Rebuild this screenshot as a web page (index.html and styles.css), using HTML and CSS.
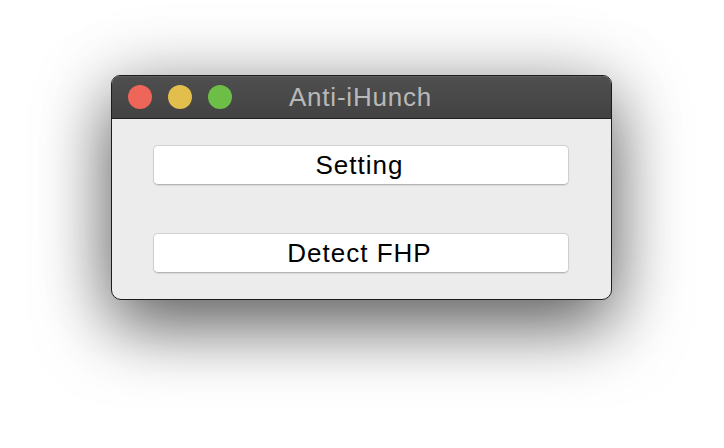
FILE: index.html
```html
<!DOCTYPE html>
<html>
<head>
<meta charset="utf-8">
<link rel="stylesheet" href="styles.css">
</head>
<body>
<div class="desk">
  <div class="window">
    <div class="titlebar">
      <div class="lights">
        <span class="light red"></span>
        <span class="light yellow"></span>
        <span class="light green"></span>
      </div>
      <div class="title">Anti-iHunch</div>
      <div></div>
    </div>
    <div class="content">
      <button class="btn">Setting</button>
      <button class="btn">Detect FHP</button>
    </div>
  </div>
</div>
</body>
</html>
```
FILE: styles.css
```css
html, body {
  margin: 0;
  padding: 0;
  background: #ffffff;
  width: 724px;
  height: 448px;
  overflow: hidden;
}
.desk {
  display: flex;
  align-items: flex-start;
  padding: 75px 0 0 111px;
}
.window {
  width: 501px;
  height: 225px;
  box-sizing: border-box;
  border: 1px solid #1c1c1c;
  border-radius: 9px 9px 10px 10px;
  overflow: hidden;
  display: flex;
  flex-direction: column;
  box-shadow: 0 26px 70px rgba(0, 0, 0, 0.6), 0 0 80px rgba(0, 0, 0, 0.14);
  background: #ececec;
}
.titlebar {
  height: 42px;
  flex: none;
  border-bottom: 1px solid #222;
  background: linear-gradient(#4f4f4f, #424242);
  box-shadow: inset 0 1px 0 #5e5e5e;
  display: grid;
  grid-template-columns: 1fr auto 1fr;
  align-items: center;
}
.lights {
  display: flex;
  gap: 16px;
  padding-left: 16px;
}
.light {
  width: 24px;
  height: 24px;
  border-radius: 50%;
  display: block;
}
.red { background: #ee665a; }
.yellow { background: #e2bf4c; }
.green { background: #6cbe47; }
.title {
  font-family: "Liberation Sans", Arial, sans-serif;
  font-size: 26px;
  letter-spacing: 0.8px;
  color: #b8b8b8;
  padding: 1px 2px 0 0;
}
.content {
  flex: 1;
  display: flex;
  flex-direction: column;
  gap: 48px;
  padding: 26px 0 0 41px;
}
.btn {
  width: 416px;
  height: 40px;
  box-sizing: border-box;
  background: #ffffff;
  border: 1px solid #cfcfcf;
  border-bottom-color: #b4b4b4;
  border-radius: 5px;
  box-shadow: 0 1px 1px rgba(0, 0, 0, 0.08);
  font-family: "Liberation Sans", Arial, sans-serif;
  font-size: 26px;
  letter-spacing: 1px;
  color: #000;
  padding: 0 3px 1px 0;
  line-height: 36px;
}
```
